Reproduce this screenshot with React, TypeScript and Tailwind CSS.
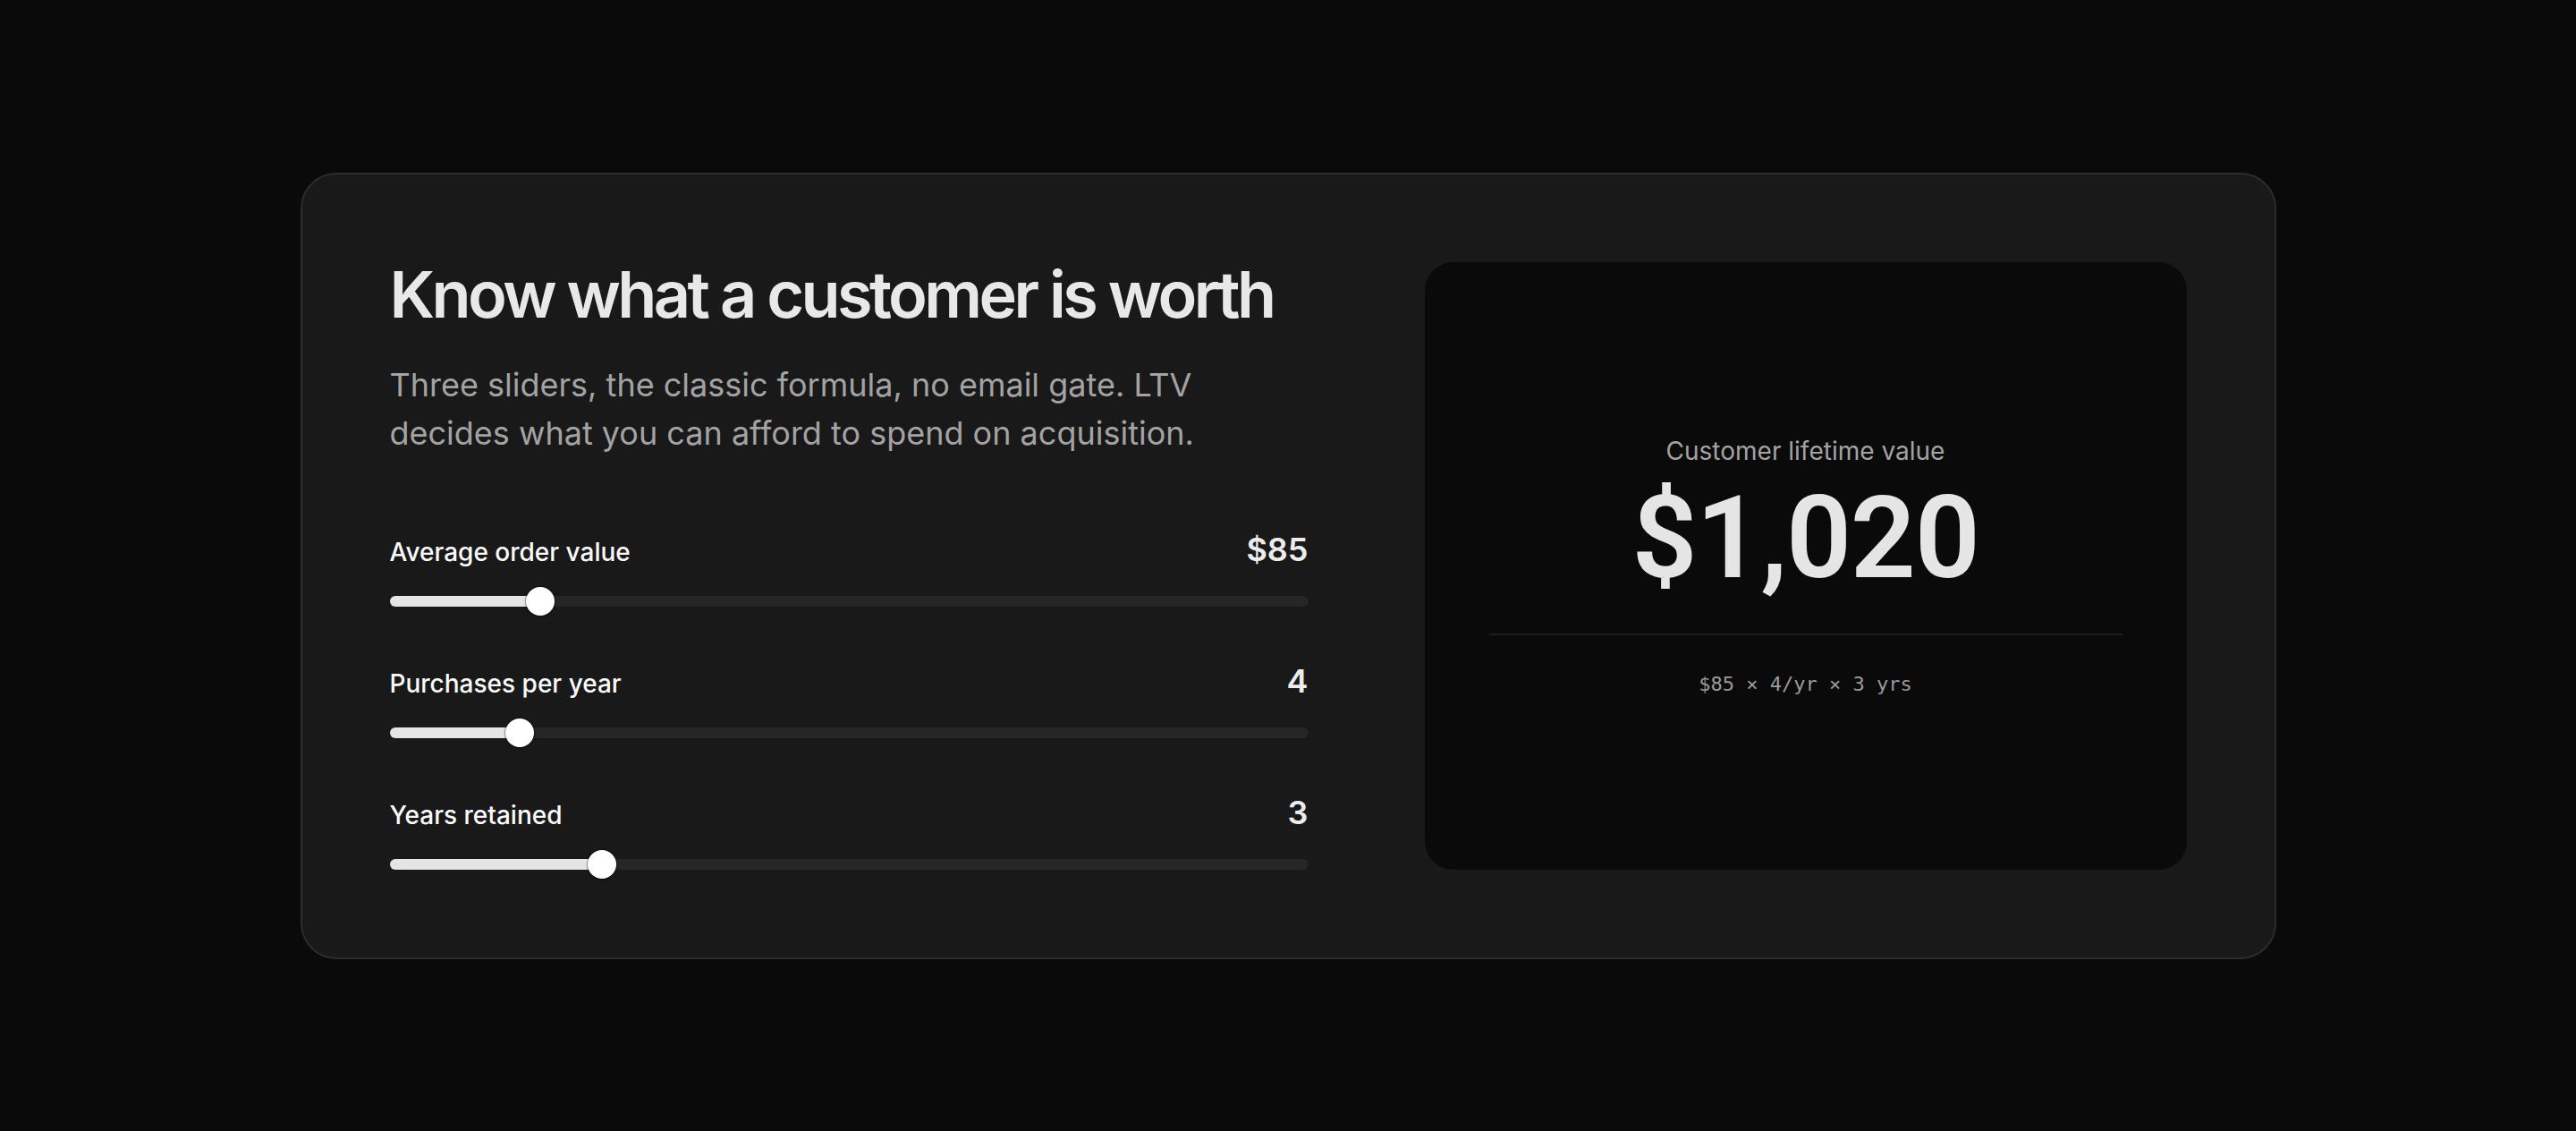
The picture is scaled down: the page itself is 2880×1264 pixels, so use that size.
import { useState } from "react";

// ── スライダー定義 ─────────────────────────────────────────
type SliderDef = {
  key: "aov" | "freq" | "years";
  label: string;
  min: number;
  max: number;
  format: (v: number) => string;
};

const SLIDERS: SliderDef[] = [
  { key: "aov",   label: "Average order value", min: 10, max: 500, format: (v) => `$${v}` },
  { key: "freq",  label: "Purchases per year",  min: 1,  max: 24,  format: (v) => `${v}` },
  { key: "years", label: "Years retained",      min: 1,  max: 10,  format: (v) => `${v}` },
];

function Slider({
  def, value, onChange,
}: { def: SliderDef; value: number; onChange: (v: number) => void }) {
  const p = (value - def.min) / (def.max - def.min);
  return (
    <div className="flex flex-col">
      <div className="flex items-baseline justify-between h-[40px]">
        <span className="text-[28px] leading-[40px] font-medium text-[#fafafa]">{def.label}</span>
        <span className="text-[36px] leading-[40px] font-semibold text-[#ececec]">{def.format(value)}</span>
      </div>
      <div className="relative mt-[32px] h-[12px] rounded-full bg-[#262626]">
        <div
          className="absolute left-0 top-0 h-full rounded-full bg-[#e5e5e5]"
          style={{ width: `calc(${p} * (100% - 32px) + 16px)` }}
        />
        <div
          className="absolute top-[-10px] w-[32px] h-[32px] rounded-full bg-white shadow-[0_0_0_1px_rgba(0,0,0,0.25),0_1px_3px_rgba(0,0,0,0.4)]"
          style={{ left: `calc(${p} * (100% - 32px))` }}
        />
        <input
          type="range"
          min={def.min}
          max={def.max}
          value={value}
          onChange={(e) => onChange(Number(e.target.value))}
          className="absolute inset-x-0 top-[-10px] h-[32px] w-full opacity-0 cursor-pointer"
        />
      </div>
    </div>
  );
}

export default function App() {
  const [vals, setVals] = useState({ aov: 85, freq: 4, years: 3 });
  const ltv = vals.aov * vals.freq * vals.years;

  return (
    <div className="min-h-screen w-full bg-[#0a0a0a] flex items-center justify-center font-['Inter',sans-serif]">
      <div className="w-[2209px] rounded-[40px] border-2 border-[#2c2c2c] bg-[#191919] p-[98px]">
        <div className="grid grid-cols-[1027px_1fr] gap-[130px]">

          {/* ── 左: 見出しとスライダー ── */}
          <div className="flex flex-col">
            <h1 className="text-[72px] leading-none font-semibold tracking-[-0.05em] text-[#e8e8e8]">
              Know what a customer is worth
            </h1>
            <p className="mt-[38px] max-w-[960px] text-[36px] leading-[54px] text-[#a3a3a3]">
              Three sliders, the classic formula, no email gate. LTV decides what you can afford to spend on acquisition.
            </p>
            <div className="mt-[83px] flex flex-col gap-[63px]">
              {SLIDERS.map((s) => (
                <Slider
                  key={s.key}
                  def={s}
                  value={vals[s.key]}
                  onChange={(v) => setVals({ ...vals, [s.key]: v })}
                />
              ))}
            </div>
          </div>

          {/* ── 右: 結果パネル ── */}
          <div className="rounded-[32px] bg-[#0a0a0a] px-[72px] flex flex-col items-center justify-center">
            <span className="text-[28px] leading-[40px] text-[#a3a3a3]">Customer lifetime value</span>
            <span className="mt-[13px] text-[128px] leading-none font-semibold tracking-[-0.01em] text-[#e5e5e5] font-['Roboto',sans-serif]">
              ${ltv.toLocaleString("en-US")}
            </span>
            <div className="mt-[43px] h-[2px] w-full bg-[#1e1e1e]" />
            <span className="mt-[39px] text-[22px] leading-[32px] text-[#9a9a9a] font-['DejaVu_Sans_Mono',monospace]">
              ${vals.aov} × {vals.freq}/yr × {vals.years} yrs
            </span>
          </div>
        </div>
      </div>
    </div>
  );
}
